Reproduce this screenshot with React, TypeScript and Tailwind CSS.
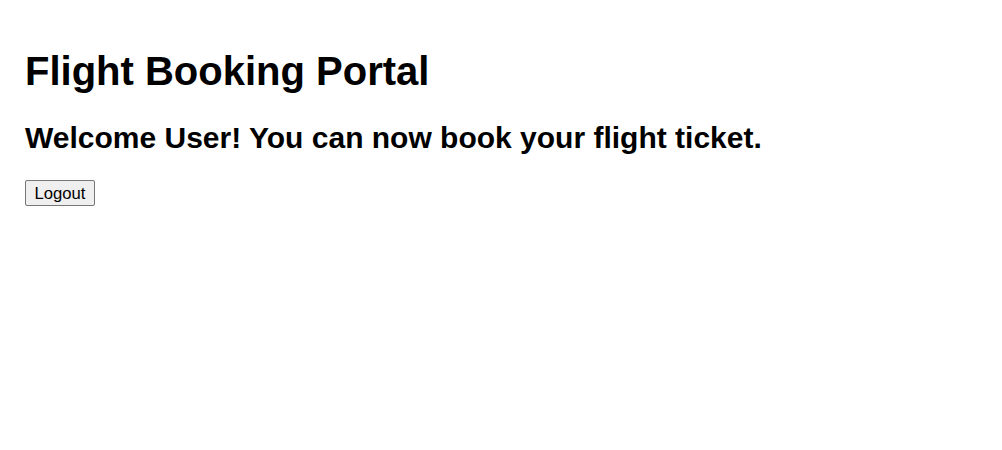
export default function App() {
  return (
    <div className="min-h-[450px] bg-white px-[25px] pt-[49px] text-black" style={{ fontFamily: '"Liberation Sans", Arial, sans-serif' }}>
      <h1 className="text-[40px] font-bold leading-[45px]">Flight Booking Portal</h1>
      <h2 className="mt-[27px] text-[30px] font-bold leading-[34px]">Welcome User! You can now book your flight ticket.</h2>
      <button className="mt-[25px] flex h-[26px] w-[70px] items-center justify-center rounded-[2px] border border-[#767676] bg-[#efefef] text-[16.67px] leading-[19px] text-black">
        Logout
      </button>
    </div>
  );
}
